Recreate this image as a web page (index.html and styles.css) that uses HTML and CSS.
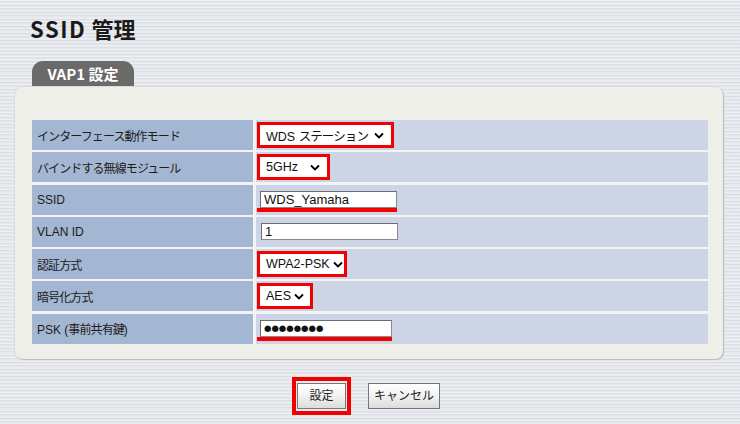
FILE: index.html
```html
<!DOCTYPE html>
<html lang="ja">
<head>
<meta charset="utf-8">
<title>SSID 管理</title>
<link rel="stylesheet" href="styles.css">
</head>
<body>
<div class="page">
  <h1 class="title"><span class="latin">SSID</span> 管理</h1>
  <div class="tab">VAP1 設定</div>
  <div class="panel">
    <div class="grid">
      <div class="label"><span class="jp">インターフェース動作モード</span></div>
      <div class="value">
        <span class="sel hl w1"><span class="sel-text">WDS <span class="jp">ステーション</span></span><svg class="chev" width="10" height="7" viewBox="0 0 10 7"><path d="M1 1.5 L5 5.5 L9 1.5" fill="none" stroke="#000" stroke-width="1.8"/></svg></span>
      </div>
      <div class="label"><span class="jp">バインドする無線モジュール</span></div>
      <div class="value">
        <span class="sel hl w2"><span class="sel-text">5GHz</span><svg class="chev" width="10" height="7" viewBox="0 0 10 7"><path d="M1 1.5 L5 5.5 L9 1.5" fill="none" stroke="#000" stroke-width="1.8"/></svg></span>
      </div>
      <div class="label">SSID</div>
      <div class="value">
        <span class="uline"><input class="txt wide" type="text" value="WDS_Yamaha"></span>
      </div>
      <div class="label">VLAN ID</div>
      <div class="value">
        <span class="plain"><input class="txt wide" type="text" value="1"></span>
      </div>
      <div class="label"><span class="jp">認証方式</span></div>
      <div class="value">
        <span class="sel hl w3"><span class="sel-text">WPA2-PSK</span><svg class="chev" width="10" height="7" viewBox="0 0 10 7"><path d="M1 1.5 L5 5.5 L9 1.5" fill="none" stroke="#000" stroke-width="1.8"/></svg></span>
      </div>
      <div class="label"><span class="jp">暗号化方式</span></div>
      <div class="value">
        <span class="sel hl w4"><span class="sel-text">AES</span><svg class="chev" width="10" height="7" viewBox="0 0 10 7"><path d="M1 1.5 L5 5.5 L9 1.5" fill="none" stroke="#000" stroke-width="1.8"/></svg></span>
      </div>
      <div class="label"><span>PSK (<span class="jp">事前共有鍵</span>)</span></div>
      <div class="value">
        <span class="uline"><input class="txt narrow dots" type="text" value="●●●●●●●●"></span>
      </div>
    </div>
  </div>
  <div class="buttons">
    <span class="btn-hl"><button class="btn b-set" type="button">設定</button></span>
    <button class="btn b-cancel" type="button">キャンセル</button>
  </div>
</div>
</body>
</html>
```

FILE: styles.css
```css
html, body {
  margin: 0;
  padding: 0;
}
body {
  width: 740px;
  height: 424px;
  overflow: hidden;
  font-family: "Liberation Sans", "Noto Sans CJK JP", sans-serif;
  color: #1c1c1c;
  background-color: #e3e6eb;
  background-image:
    repeating-linear-gradient(180deg,
      rgba(255,255,255,0.4) 0px, rgba(255,255,255,0.4) 1px,
      rgba(200,204,212,0.25) 1px, rgba(200,204,212,0.25) 2px,
      rgba(255,255,255,0) 2px, rgba(255,255,255,0) 3px,
      rgba(255,255,255,0.25) 3px, rgba(255,255,255,0.25) 5px,
      rgba(190,195,204,0.2) 5px, rgba(190,195,204,0.2) 6px,
      rgba(255,255,255,0) 6px, rgba(255,255,255,0) 7px);
}
.page {
  padding: 14px 17px 0 15px;
}
.title {
  margin: 0 0 19px 15px;
  font-family: "Noto Sans CJK JP", "Liberation Sans", sans-serif;
  font-weight: 700;
  font-size: 22px;
  line-height: 28px;
  color: #1a1a1a;
}
.latin {
  letter-spacing: 1.6px;
}
.tab {
  margin-left: 17px;
  width: 102px;
  height: 26px;
  box-sizing: border-box;
  background: #6a6a6a;
  border-radius: 11px 11px 0 0;
  color: #fff;
  font-family: "Noto Sans CJK JP", "Liberation Sans", sans-serif;
  font-weight: 700;
  font-size: 15px;
  line-height: 26px;
  text-align: center;
}
.panel {
  background: #efefea;
  border-radius: 8px;
  box-shadow: 1px 1px 1px #b9bbbf, 0 0 0 1px #dcdcd6;
  padding: 33px 15px 15px 17px;
}
.grid {
  display: grid;
  grid-template-columns: 221px 1fr;
  grid-auto-rows: 30px;
  column-gap: 3px;
  row-gap: 2.3px;
  background: #f3f4f6;
}
.label {
  background: #a3b6d2;
  display: flex;
  align-items: center;
  padding-left: 5px;
  font-size: 12px;
  white-space: nowrap;
}
.jp {
  letter-spacing: -0.9px;
}
.value {
  background: #ccd4e6;
  display: flex;
  align-items: center;
  padding-left: 1px;
}
.sel {
  display: inline-flex;
  align-items: center;
  justify-content: space-between;
  box-sizing: border-box;
  height: 26px;
  background: #fff;
  padding: 0 7px 0 6px;
  font-size: 12.5px;
  color: #111;
  white-space: nowrap;
}
.sel-text {
  flex-shrink: 0;
}
.hl {
  border: 3px solid #f00000;
}
.w1 { width: 137px; }
.w2 { width: 73px; }
.w3 { width: 90px; }
.w4 { width: 56px; }
.chev {
  display: block;
  flex-shrink: 0;
  margin-left: 3px;
}
.uline {
  display: inline-block;
  padding: 3px 0 0 3px;
  border-bottom: 4px solid #f00000;
  line-height: 0;
}
.plain {
  display: inline-block;
  padding-left: 4px;
  line-height: 0;
}
.txt {
  box-sizing: border-box;
  height: 17px;
  margin: 0;
  padding: 0 3px;
  border: 1px solid #8a8a8a;
  border-top-color: #6d6d6d;
  border-left-color: #6d6d6d;
  background: #fff;
  font-family: "Liberation Sans", "Noto Sans CJK JP", sans-serif;
  font-size: 13px;
  color: #111;
  outline: none;
}
.wide { width: 137px; }
.narrow { width: 132px; }
.dots {
  font-family: "DejaVu Sans", sans-serif;
  font-size: 8.5px;
  letter-spacing: 0;
}
.buttons {
  display: flex;
  justify-content: center;
  align-items: center;
  gap: 17px;
  margin-top: 18px;
  padding-right: 6px;
}
.btn-hl {
  display: inline-block;
  border: 4px solid #f00000;
  padding: 2px 1px;
  line-height: 0;
}
.btn {
  box-sizing: border-box;
  height: 26px;
  margin: 0;
  padding: 0;
  border: 1px solid #767676;
  background: linear-gradient(180deg, #ffffff 0%, #f3f3f3 45%, #dcdcdc 100%);
  font-family: "Liberation Sans", "Noto Sans CJK JP", sans-serif;
  font-size: 12px;
  color: #222;
  line-height: 24px;
}
.b-set { width: 49px; }
.b-cancel { width: 72px; }
```
